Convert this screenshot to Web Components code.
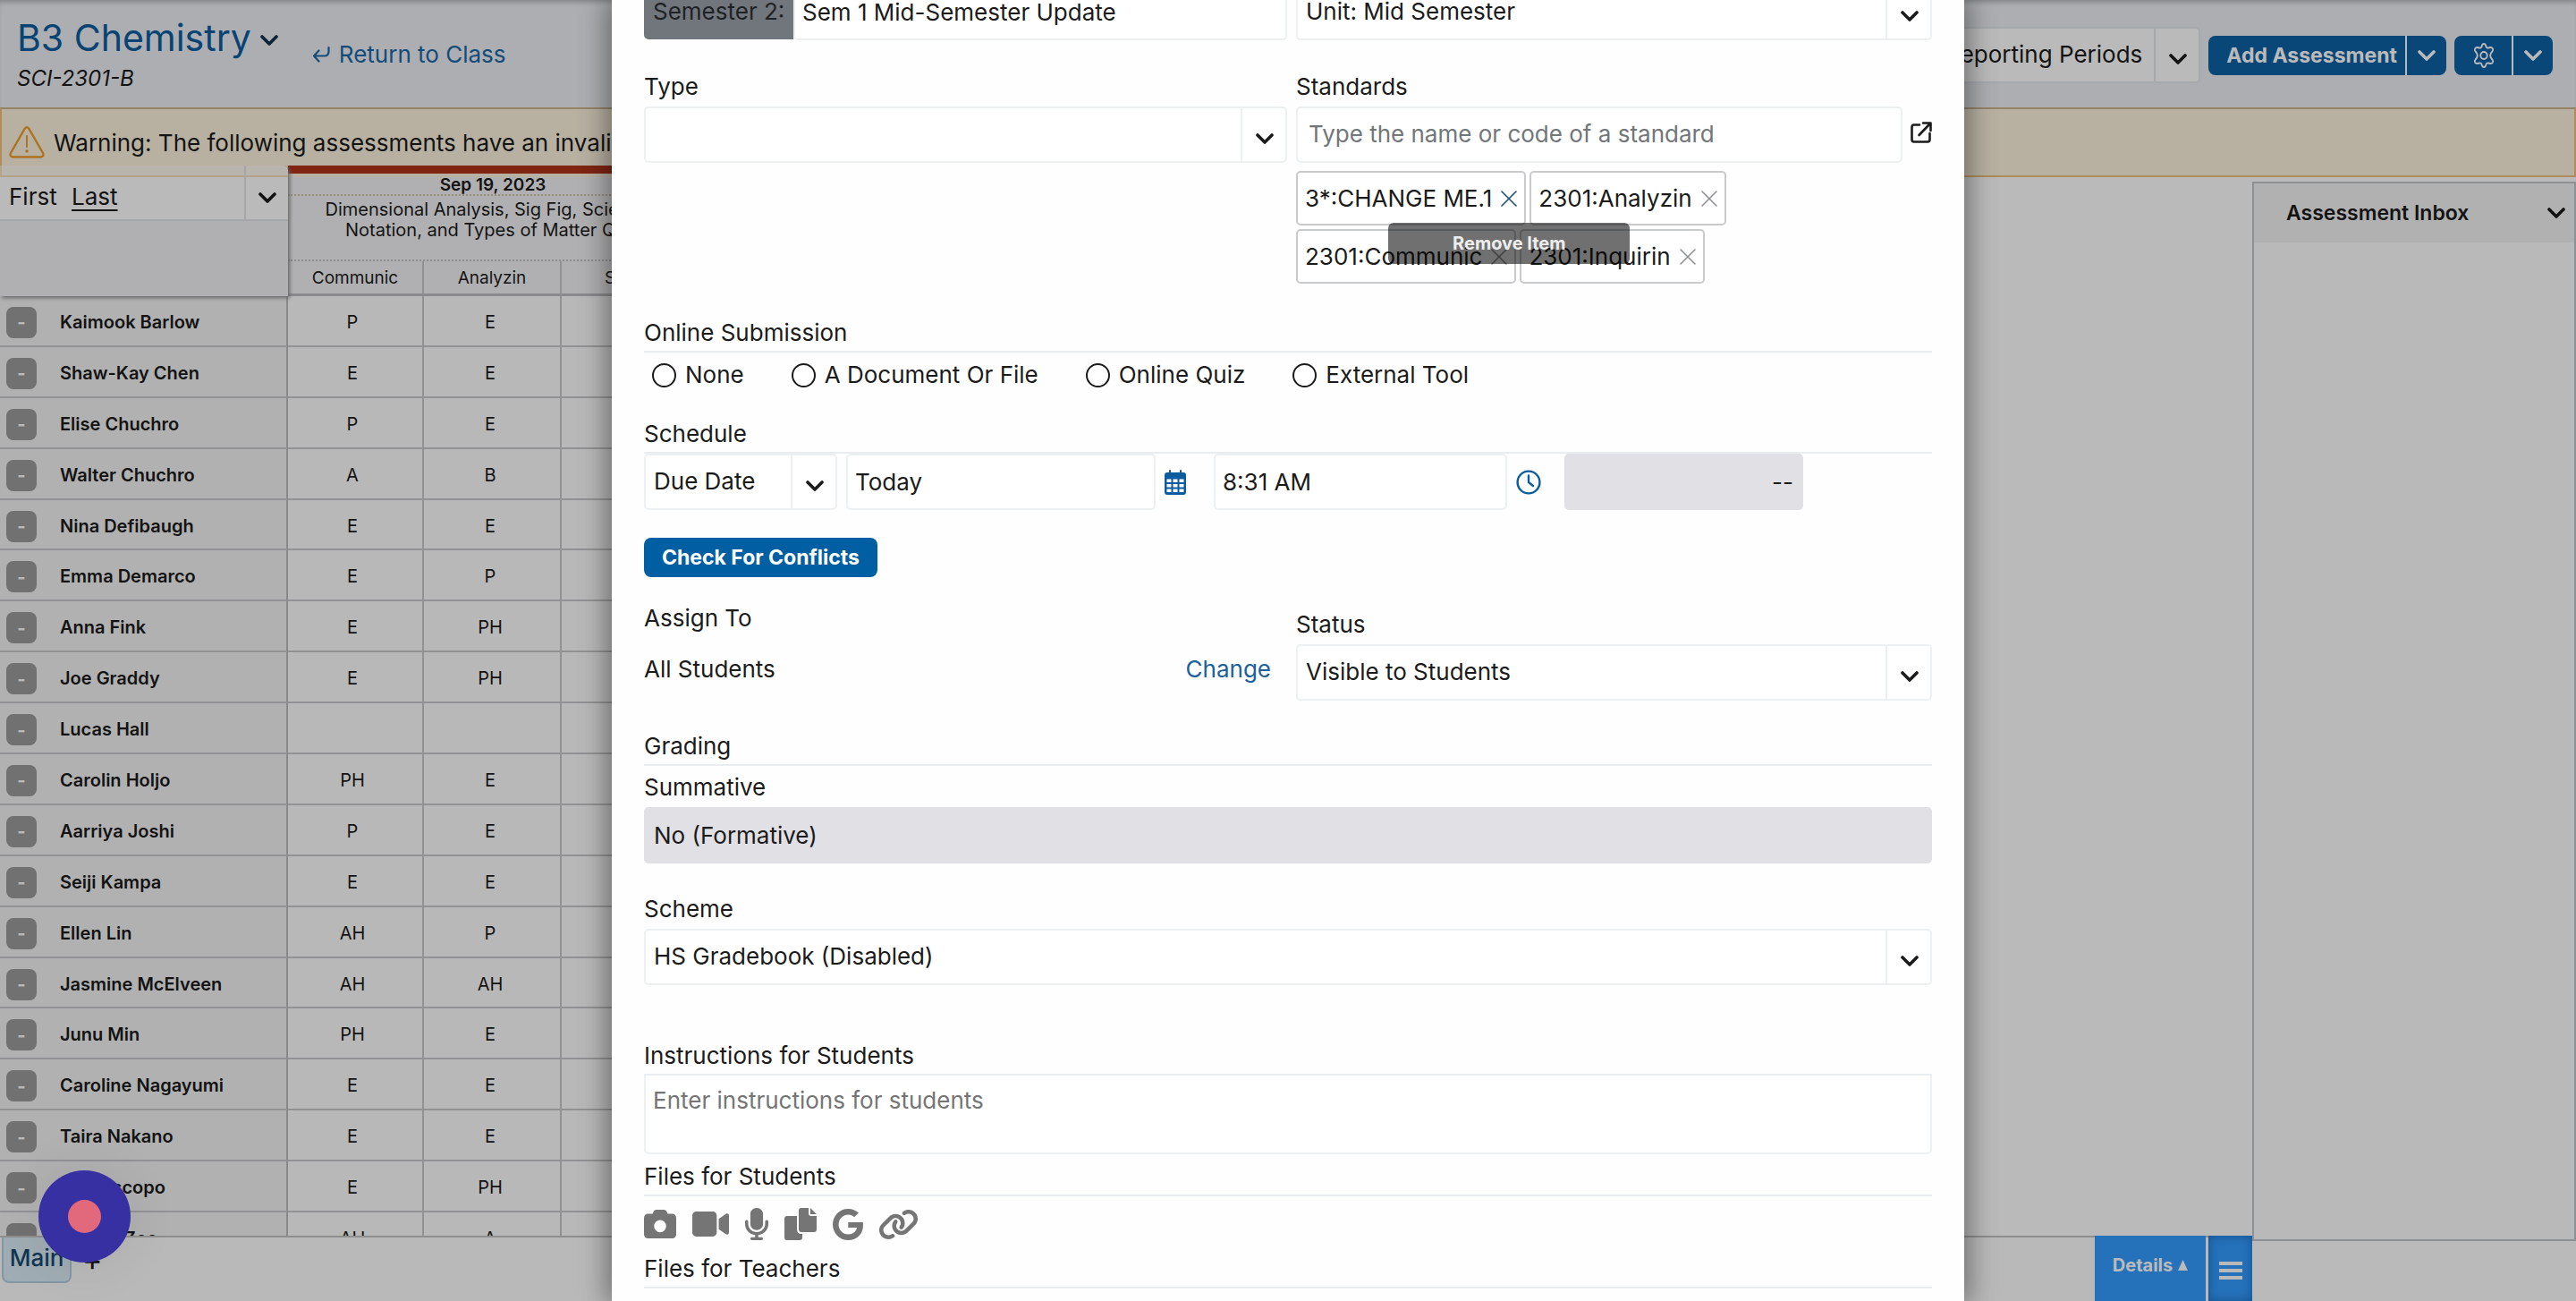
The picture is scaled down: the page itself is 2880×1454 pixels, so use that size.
<!DOCTYPE html>
<html lang="en">
<head>
<meta charset="utf-8">
<title>B3 Chemistry Gradebook</title>
<style>
  html, body { margin: 0; height: 100%; }
  body { font: 400 26px/32px Inter, "Liberation Sans", sans-serif; color: #1b1b1b; background: #fff; overflow: hidden; }
</style>
</head>
<body>
<gb-app></gb-app>
<script>
const ICONS = {
  chevron: ['0 0 20 12', '<path d="M2 2l8 8 8-8" fill="none" stroke="currentColor" stroke-width="3.600" stroke-linecap="round" stroke-linejoin="round"/>'],
  back: ['0 0 20 20', '<path d="M18.500 2v4.500q0 5-5 5H2M7.500 5.500L2 11.500l5.500 6" fill="none" stroke="currentColor" stroke-width="2.200" stroke-linecap="round" stroke-linejoin="round"/>'],
  warn: ['0 0 40 36', '<path d="M17.600 3q2.400-3.500 4.800 0L38 30q1.500 4-2.500 4.500h-31Q.500 34 2 30z" fill="none" stroke="currentColor" stroke-width="2.400"/><path d="M20 11v12" stroke="currentColor" stroke-width="2" stroke-linecap="round"/><circle cx="20" cy="28" r="1.800" fill="currentColor"/>'],
  gear: ['0 0 28 28', '<g fill="none" stroke="currentColor" stroke-width="2" stroke-linejoin="round"><path d="M11.600 3.200q.6-2.200 2.400-2.200t2.400 2.200q.6 2.900 3.400 2.300l1.600-.5q2.200-.4 3.200 1.200 1 1.700-.5 3.300-2.400 2.300-2.400 4.500t2.400 4.500q1.500 1.600.5 3.300-1 1.600-3.200 1.200l-1.600-.5q-2.800-.6-3.400 2.300-.6 2.200-2.400 2.200t-2.400-2.200q-.6-2.900-3.400-2.300l-1.600.5q-2.200.4-3.200-1.200-1-1.700.5-3.300 2.400-2.300 2.400-4.500T3.900 9.500q-1.500-1.600-.5-3.300 1-1.600 3.200-1.200l1.600.5q2.800.6 3.400-2.300z"/><circle cx="14" cy="14" r="4"/></g>'],
  external: ['0 0 24 24', '<path d="M10 3.500H4Q1.500 3.500 1.500 6v14q0 2.500 2.500 2.500h15q2.500 0 2.500-2.500v-7M14 1.500h8.500V10M22 2L9.500 15" fill="none" stroke="currentColor" stroke-width="2.600" stroke-linecap="round" stroke-linejoin="round"/>'],
  cross: ['0 0 18 18', '<path d="M1 1l16 16M17 1L1 17" stroke="currentColor" stroke-width="1.600" stroke-linecap="round"/>'],
  calendar: ['0 0 24 28', '<path fill="currentColor" fill-rule="evenodd" d="M5 1q0-1 1-1t1 1v2h10V1q0-1 1-1t1 1v2h2q3 0 3 3v19q0 3-3 3H3q-3 0-3-3V6q0-3 3-3h2zM2.500 10.500v3.500h5v-3.500zM9.500 10.500v3.500h5v-3.500zM16.500 10.500v3.500h5v-3.500zM2.500 16v3.500h5V16zM9.500 16v3.500h5V16zM16.500 16v3.500h5V16zM2.500 21.500V25h5v-3.500zM9.500 21.500V25h5v-3.500zM16.500 21.500V25h5v-3.500z"/>'],
  clock: ['0 0 28 28', '<g fill="none" stroke="currentColor" stroke-width="2.400" stroke-linecap="round"><circle cx="14" cy="14" r="12.400"/><path d="M14 6.500V14l5 4"/></g>'],
  camera: ['0 32 512 448', '<path fill="currentColor" d="M149.100 64.800L138.700 96H64C28.700 96 0 124.700 0 160V416c0 35.300 28.700 64 64 64H448c35.300 0 64-28.700 64-64V160c0-35.300-28.700-64-64-64H373.300L362.900 64.800C356.400 45.200 338.100 32 317.400 32H194.600c-20.700 0-39 13.200-45.500 32.800zM256 192a96 96 0 1 1 0 192 96 96 0 1 1 0-192z"/>'],
  video: ['0 64 576 384', '<path fill="currentColor" d="M0 128C0 92.700 28.700 64 64 64H320c35.300 0 64 28.700 64 64V384c0 35.300-28.700 64-64 64H64c-35.300 0-64-28.700-64-64V128zM559.100 99.800c10.400 5.600 16.900 16.400 16.900 28.200V384c0 11.800-6.500 22.600-16.900 28.200s-23 5-32.900-1.600l-96-64L416 337.100V174.900l14.200-9.500 96-64c9.800-6.500 22.400-7.200 32.900-1.600z"/>'],
  mic: ['16 0 352 512', '<path fill="currentColor" d="M192 0C139 0 96 43 96 96V256c0 53 43 96 96 96s96-43 96-96V96c0-53-43-96-96-96zM64 216c0-13.300-10.700-24-24-24s-24 10.700-24 24v40c0 89.100 66.200 162.700 152 174.400V464H120c-13.300 0-24 10.700-24 24s10.700 24 24 24h144c13.300 0 24-10.700 24-24s-10.700-24-24-24H216V430.400c85.800-11.700 152-85.300 152-174.400V216c0-13.300-10.700-24-24-24s-24 10.700-24 24v40c0 70.700-57.300 128-128 128s-128-57.300-128-128V216z"/>'],
  copy: ['0 0 36 36', '<path fill="currentColor" d="M19 0h8v6q0 3 3 3h6v15q0 3-3 3H19q-3 0-3-3V3q0-3 3-3zM29 0l7 7h-7zM3 9h11v15q0 5 5 5h1v4q0 3-3 3H3q-3 0-3-3V12q0-3 3-3z"/>'],
  google: ['0 8 488 496', '<path fill="currentColor" d="M488 261.800C488 403.300 391.100 504 248 504 110.800 504 0 393.200 0 256S110.800 8 248 8c66.800 0 123 24.500 166.300 64.900l-67.500 64.900C258.500 52.600 94.300 116.600 94.300 256c0 86.500 69.100 156.600 153.700 156.600 98.200 0 135-70.400 140.800-106.900H248v-85.300h236.100c2.300 12.700 3.900 24.900 3.900 41.400z"/>'],
  link: ['18 20 604 472', '<path fill="currentColor" d="M579.800 267.700c56.500-56.500 56.500-148 0-204.500c-50-50-128.800-56.500-186.300-15.400l-1.600 1.100c-14.400 10.300-17.700 30.300-7.400 44.600s30.300 17.700 44.600 7.400l1.600-1.100c32.100-22.900 76-19.300 103.800 8.600c31.500 31.500 31.500 82.500 0 114L422.300 334.800c-31.500 31.500-82.500 31.500-114 0c-27.900-27.900-31.500-71.800-8.600-103.800l1.100-1.600c10.300-14.400 6.900-34.400-7.400-44.600s-34.400-6.900-44.600 7.400l-1.100 1.600C206.500 251.200 213 330 263 380c56.500 56.500 148 56.500 204.500 0L579.800 267.700zM60.200 244.300c-56.500 56.500-56.500 148 0 204.500c50 50 128.800 56.500 186.300 15.400l1.600-1.100c14.400-10.300 17.700-30.300 7.400-44.600s-30.300-17.700-44.600-7.400l-1.600 1.100c-32.100 22.900-76 19.300-103.800-8.600C74 372 74 321 105.500 289.500L217.700 177.200c31.500-31.500 82.500-31.500 114 0c27.900 27.900 31.500 71.800 8.600 103.900l-1.100 1.600c-10.300 14.400-6.900 34.400 7.400 44.600s34.400 6.900 44.600-7.400l1.100-1.600C433.500 260.800 427 182 377 132c-56.500-56.500-148-56.500-204.500 0L60.200 244.300z"/>'],
  menu: ['0 0 26 20', '<path d="M0 2h26M0 10h26M0 18h26" stroke="currentColor" stroke-width="4"/>'],
  up: ['0 0 11 12', '<path d="M5.500 0L11 12H0z" fill="currentColor"/>']
};

const BASE = `*{box-sizing:border-box}button,input,select,textarea{font:inherit;color:inherit;margin:0;border-radius:0}button{border:0;background:none;padding:0}a{text-decoration:none}h1,h2,h3,p{margin:0;font-weight:400}`;

class Base extends HTMLElement {
  connectedCallback() {
    if (this.shadowRoot) return;
    this.attachShadow({ mode: 'open' }).innerHTML = `<style>${BASE}${this.css()}</style>${this.html()}`;
  }
  at(name, fallback = '') { return this.getAttribute(name) ?? fallback; }
}

customElements.define('gb-icon', class extends Base {
  css() { return `:host{display:inline-flex;flex:none}svg{display:block}`; }
  html() {
    const [box, art] = ICONS[this.at('name')];
    return `<svg viewBox="${box}" width="${this.at('w')}" height="${this.at('h')}" preserveAspectRatio="none" aria-hidden="true">${art}</svg>`;
  }
});

/* Drop-down with a divided arrow cell */
customElements.define('gb-select', class extends Base {
  css() { return `
    :host{display:block;min-width:0}
    label{display:block;margin-bottom:6px}
    .box{display:grid;grid-template-columns:minmax(0,1fr) 50px;height:63px;border:2px solid var(--line,#edf0f2);border-radius:5px;background:#fff}
    select{grid-area:1/1/2/3;appearance:none;background:none;border:0;outline:0;width:100%;padding:0 58px 2px 9px;text-overflow:ellipsis}
    :host([end]) select{text-align-last:right;padding-right:63px}
    span{grid-area:1/2;display:grid;place-items:center;border-left:2px solid var(--line,#edf0f2);padding:8px 0 0 2px;pointer-events:none}`; }
  html() {
    const label = this.at('label'), value = this.at('value');
    return `${label ? `<label for="c">${label}</label>` : ''}<div class="box"><select id="c" ${label ? '' : `aria-label="${this.at('name')}"`}><option>${value}</option></select><span><gb-icon name="chevron" w="20" h="12"></gb-icon></span></div>`;
  }
});

customElements.define('gb-input', class extends Base {
  css() { return `
    :host{display:block;min-width:0}
    label{display:block;margin-bottom:6px}
    input{display:block;width:100%;height:63px;border:2px solid #edf0f2;border-radius:5px;padding:0 8px;background:#fff;outline:0}
    input::placeholder{color:#71767a;opacity:1}
    input[readonly]{background:#e0e0e5;border-color:#e0e0e5;padding:0 9px}
    :host([wide-pad]) input{padding:0 12px 2px}
    :host([end]) input{text-align:right}`; }
  html() {
    const label = this.at('label');
    return `${label ? `<label for="c">${label}</label>` : ''}<input id="c" type="text" ${label ? '' : `aria-label="${this.at('name')}"`} value="${this.at('value')}" placeholder="${this.at('placeholder')}" ${this.hasAttribute('locked') ? 'readonly' : ''}>`;
  }
});

customElements.define('gb-heading', class extends Base {
  css() { return `:host{display:block}h2{font-size:inherit;line-height:32px;padding-bottom:4px;border-bottom:2px solid #e9edef}`; }
  html() { return `<h2><slot></slot></h2>`; }
});

customElements.define('gb-button', class extends Base {
  css() { return `
    :host{display:flex}
    button{height:44px;background:var(--blue,#005ea2);color:#fff;font-weight:700;font-size:23px;line-height:32px;padding:0 20px;display:flex;align-items:center;border-radius:8px}
    :host([split]) button:first-of-type{border-radius:8px 0 0 8px;padding-right:9px}
    button.more{border-left:2px solid #fff;border-radius:0 8px 8px 0;padding:0 12px}
    :host([split][icon-only]) button:first-of-type{padding-right:18px}`; }
  html() {
    const name = this.at('name');
    return `<button type="button"${name ? ` aria-label="${name}"` : ''}><slot></slot></button>${this.hasAttribute('split') ? `<button class="more" type="button" aria-label="More options"><gb-icon name="chevron" w="20" h="12"></gb-icon></button>` : ''}`;
  }
});

customElements.define('gb-chip', class extends Base {
  css() { return `
    :host{display:flex;align-items:center;gap:10px;height:61px;padding:0 8px;border:2px solid #c8cacc;border-radius:5px;background:#fff;white-space:nowrap}
    button{display:grid;color:#8d9092;position:relative}
    :host([active]) button{color:#1a4f7d}
    [role=tooltip]{position:absolute;left:50%;top:36px;transform:translateX(-50%);width:270px;height:46px;z-index:3;background:rgba(0,0,0,.56);color:#eee;font-weight:700;font-size:20px;line-height:46px;border-radius:6px;text-align:center}`; }
  html() { return `<span><slot></slot></span><button type="button" aria-label="Remove Item"><gb-icon name="cross" w="18" h="18"></gb-icon>${this.hasAttribute('active') ? '<span role="tooltip">Remove Item</span>' : ''}</button>`; }
});

customElements.define('gb-radio', class extends Base {
  css() { return `:host{display:block}label{display:flex;align-items:center;gap:10px}input{appearance:none;width:27px;height:27px;border:2px solid #1b1b1b;border-radius:50%;background:#fff}`; }
  html() { return `<label><input type="radio" name="submission"><span><slot></slot></span></label>`; }
});

customElements.define('gb-header', class extends Base {
  css() { return `
    :host{display:flex;justify-content:space-between;height:120px;padding:0 26px 0 19px;background:#edeff3;box-shadow:inset 0 5px 5px -2px #b9bbbf}
    .left{display:flex;gap:38px}
    h1{font-size:41px;line-height:48px;color:#0a5c9e;display:flex;align-items:center;gap:10px;padding-top:18px}
    h1 gb-icon{color:#12304c;padding-top:6px}
    p{font-style:italic;font-size:24px;line-height:30px;margin-top:7px}
    a{color:#1b69a8;display:flex;gap:10px;align-items:center;height:32px;margin-top:45px}
    .right{display:flex;align-items:flex-start;gap:9px;padding-top:30px}
    .right gb-button{margin-top:10px;--blue:#0f62a6}
    gb-select{--line:#e4e8ec;width:340px}`; }
  html() { return `
    <div class="left"><div><h1>B3 Chemistry <gb-icon name="chevron" w="20" h="12"></gb-icon></h1><p>SCI-2301-B</p></div>
    <a href="#class"><gb-icon name="back" w="20" h="20"></gb-icon>Return to Class</a></div>
    <div class="right"><gb-select end name="Reporting period" value="All Reporting Periods"></gb-select>
    <gb-button split>Add Assessment</gb-button>
    <gb-button split icon-only name="Settings"><gb-icon name="gear" w="26" h="28"></gb-icon></gb-button></div>`; }
});

customElements.define('gb-warning', class extends Base {
  css() { return `:host{display:flex;gap:10px;height:78px;padding:19px 8px 0;background:#fcf3de;border:2px solid #f0c27c;border-top-color:#cdb68c;white-space:nowrap;overflow:hidden}gb-icon{color:#ee9f2d}p{line-height:38px}`; }
  html() { return `<gb-icon name="warn" w="40" h="36"></gb-icon><p>Warning: The following assessments have an invalid date.</p>`; }
});

const ROWS = [['Kaimook Barlow','P','E'],['Shaw-Kay Chen','E','E'],['Elise Chuchro','P','E'],['Walter Chuchro','A','B'],['Nina Defibaugh','E','E'],['Emma Demarco','E','P'],['Anna Fink','E','PH'],['Joe Graddy','E','PH'],['Lucas Hall','',''],['Carolin Holjo','PH','E'],['Aarriya Joshi','P','E'],['Seiji Kampa','E','E'],['Ellen Lin','AH','P'],['Jasmine McElveen','AH','AH'],['Junu Min','PH','E'],['Caroline Nagayumi','E','E'],['Taira Nakano','E','E'],['Leo Piscopo','E','PH'],['Valeria Zoe','AH','A']];

customElements.define('gb-table', class extends Base {
  css() { return `
    :host{display:block;overflow:hidden}
    table{border-collapse:separate;border-spacing:0;table-layout:fixed;width:782px;height:1227px;font-size:20px;line-height:23px}
    th,td{padding:0;font-weight:400;text-align:center;border-right:2px solid #c9c9cb;border-bottom:2px solid #c9c9cb;background:#fdfdfd}
    thead th{background:#f2f2f4}
    thead .sort{background:linear-gradient(rgba(255,255,255,.5) 62px,#f2f2f4 62px);vertical-align:top;text-align:left;border:0;box-shadow:2px 2px 4px #8a8a8a;position:relative;border-radius:0 6px 0 0}
    .pick{display:grid;grid-template-columns:1fr 49px;height:62px;border-bottom:2px solid #e2e4e6;font-size:26px;line-height:32px}
    .pick button{text-align:left;padding:10px 0 0 10px}.pick u{margin-left:9px;text-decoration-thickness:2px;text-underline-offset:5px}
    .pick span{border-left:2px solid #e2e4e6;display:grid;place-items:center;padding-top:12px}
    .date{height:34px;border-top:9px solid #ae331a;border-bottom:2px dotted #c0c0c2;font-weight:600;font-size:19px;line-height:20px;padding-top:3px;background:linear-gradient(#fcf3de 4px,#f2f2f4 4px)}
    .title{height:73px;vertical-align:top;padding-top:4px;border-bottom:2px dotted #c0c0c2}
    .std{height:39px;border-bottom:3px solid #bdbdc0;font-size:19px}
    tbody th,tbody td{padding-top:4px}
    tbody th{background:#f3f3f3;text-align:left;font-weight:600;border-right-color:#bcbcc0}
    .name{display:flex;align-items:center;gap:26px;padding-left:7px}
    .name button{width:34px;height:35px;border-radius:8px;background:#9c9c9c;color:#fff;line-height:32px;font-weight:700}
    tbody td:nth-child(2){padding-right:6px}tbody td:nth-child(3){padding-right:4px}`; }
  html() { return `<table>
    <colgroup><col style="width:322px"><col style="width:152px"><col style="width:154px"><col></colgroup>
    <thead><tr><th class="sort" rowspan="3"><div class="pick"><button type="button">First <u>Last</u></button><span><gb-icon name="chevron" w="20" h="12"></gb-icon></span></div></th><th class="date" colspan="3">Sep 19, 2023</th></tr>
    <tr><th class="title" colspan="3">Dimensional Analysis, Sig Fig, Scientific<br>Notation, and Types of Matter Quiz</th></tr>
    <tr><th class="std">Communic</th><th class="std">Analyzin</th><th class="std">Scient</th></tr></thead>
    <tbody>${ROWS.map(r => `<tr><th scope="row"><div class="name"><button type="button">-</button>${r[0]}</div></th><td>${r[1]}</td><td>${r[2]}</td><td></td></tr>`).join('')}</tbody></table>`; }
});

customElements.define('gb-inbox', class extends Base {
  css() { return `:host{display:block;border:2px solid #c3c7cb;background:#fefefe}header{display:flex;justify-content:space-between;align-items:center;height:66px;background:#f3f3f3;padding:0 10px 0 36px}h2{font-size:23px;line-height:32px;font-weight:600}`; }
  html() { return `<header><h2>Assessment Inbox</h2><gb-icon name="chevron" w="20" h="12"></gb-icon></header>`; }
});

customElements.define('gb-footer', class extends Base {
  css() { return `
    :host{display:flex;justify-content:space-between;height:73px;border-top:2px solid #c3c3c5;background:#fefefe}
    .tabs{display:flex;gap:12px;padding-left:2px}
    .tab{width:78px;height:51px;background:#dcecf6;border:2px solid #b4cfe2;border-top:0;border-radius:0 0 8px 8px;font-weight:500;display:grid;place-items:center;padding-bottom:4px;color:#174a74}
    .add{font-size:34px;padding:0 0 22px}
    .actions{display:flex;gap:3px;margin-top:-2px}
    .actions button{background:#349cff;color:#fff;font-weight:700;font-size:20px;display:flex;align-items:center;justify-content:center;gap:6px;width:124px;padding-bottom:8px}
    .actions button + button{width:49px;padding:4px 0 0;box-shadow:inset 0 0 12px #1c6fc0}`; }
  html() { return `<div class="tabs"><button class="tab" type="button">Main</button><button class="add" type="button">+</button></div>
    <div class="actions"><button type="button">Details <gb-icon name="up" w="11" h="12"></gb-icon></button><button type="button" aria-label="Menu"><gb-icon name="menu" w="26" h="20"></gb-icon></button></div>`; }
});

customElements.define('gb-dialog', class extends Base {
  css() { return `
    :host{display:block;background:#fefefe;padding:0 36px;box-shadow:0 0 30px 4px rgba(0,0,0,.45)}
    .pair{display:grid;grid-template-columns:719px minmax(0,1fr);gap:10px}
    .top{margin-top:-18px;height:62px}
    .sem{display:flex;align-items:center}
    .sem span{height:60px;width:167px;background:#71767d;color:#1f2225;padding:13px 0 0 10px;border-radius:0 0 0 5px}
    .sem gb-input{flex:1}
    .types{margin-top:37px}
    .std{display:flex;align-items:flex-end;gap:9px}.std gb-input{flex:1}
    .std button{height:63px;padding-bottom:6px;display:flex;align-items:center}
    .chips{display:flex;flex-wrap:wrap;gap:4px;margin-top:9px;max-width:520px}
    .online{margin-top:39px}
    .radios{display:flex;gap:53px;height:50px;align-items:center;padding-left:9px}
    .sched{margin-top:25px}
    .when{display:flex;align-items:center}
    .when gb-icon{color:#0a5c9e;margin-left:10px}
    .check{margin-top:31px}
    .assign{margin-top:30px}
    .assign h3{font-size:inherit}
    .who{display:flex;justify-content:space-between;margin-top:25px;padding-right:18px}a{color:#1b619c}
    .assign gb-select{margin-top:7px}
    .grading{margin-top:35px}.grading + gb-input{margin-top:8px}
    .scheme{margin-top:35px}
    .instr{margin-top:63px}
    textarea{display:block;width:100%;height:88px;resize:none;border:2px solid #edf0f2;border-top:0;border-radius:0 0 5px 5px;padding:12px 8px;outline:0;background:#fff}
    textarea::placeholder{color:#757575;opacity:1}
    .files{margin-top:9px}
    .tools{display:flex;align-items:center;gap:18px;height:65px;padding-bottom:3px;color:#757575}
    .tools button{display:grid;color:inherit}`; }
  html() {
    const tool = (n, w, h, l) => `<button type="button" aria-label="${l}"><gb-icon name="${n}" w="${w}" h="${h}"></gb-icon></button>`;
    return `
    <div class="pair top"><div class="sem"><span>Semester 2:</span><gb-input name="Semester 2 unit" value="Sem 1 Mid-Semester Update"></gb-input></div><gb-select name="Unit" value="Unit: Mid Semester"></gb-select></div>
    <div class="pair types"><gb-select label="Type" value=""></gb-select>
      <div><div class="std"><gb-input wide-pad label="Standards" placeholder="Type the name or code of a standard"></gb-input><button type="button" aria-label="Browse standards"><gb-icon name="external" w="24" h="24"></gb-icon></button></div>
      <div class="chips"><gb-chip active>3*:CHANGE ME.1</gb-chip><gb-chip>2301:Analyzin</gb-chip><gb-chip>2301:Communic</gb-chip><gb-chip>2301:Inquirin</gb-chip></div></div></div>
    <gb-heading class="online">Online Submission</gb-heading>
    <div class="radios"><gb-radio>None</gb-radio><gb-radio>A Document Or File</gb-radio><gb-radio>Online Quiz</gb-radio><gb-radio>External Tool</gb-radio></div>
    <gb-heading class="sched">Schedule</gb-heading>
    <div class="when"><gb-select name="Date kind" value="Due Date" style="width:216px;margin-right:10px"></gb-select><gb-input name="Date" value="Today" style="width:346px"></gb-input><gb-icon name="calendar" w="24" h="28" style="margin-right:31px"></gb-icon><gb-input name="Time" value="8:31 AM" style="width:328px"></gb-input><gb-icon name="clock" w="28" h="28" style="margin-right:26px"></gb-icon><gb-input end locked name="Conflicts" value="--" style="width:267px"></gb-input></div>
    <gb-button class="check">Check For Conflicts</gb-button>
    <div class="pair assign"><div><h3>Assign To</h3><div class="who"><span>All Students</span><a href="#change">Change</a></div></div><gb-select label="Status" value="Visible to Students"></gb-select></div>
    <gb-heading class="grading">Grading</gb-heading>
    <gb-input locked label="Summative" value="No (Formative)"></gb-input>
    <gb-select class="scheme" label="Scheme" value="HS Gradebook (Disabled)"></gb-select>
    <gb-heading class="instr">Instructions for Students</gb-heading>
    <textarea aria-label="Instructions for Students" placeholder="Enter instructions for students"></textarea>
    <gb-heading class="files">Files for Students</gb-heading>
    <div class="tools">${tool('camera', 36, 32, 'Photo')}${tool('video', 41, 28, 'Video')}${tool('mic', 26, 36, 'Audio')}${tool('copy', 36, 36, 'File')}${tool('google', 34, 35, 'Google Drive')}${tool('link', 43, 33, 'Link')}</div>
    <gb-heading>Files for Teachers</gb-heading>`;
  }
});

customElements.define('gb-app', class extends Base {
  css() { return `
    :host{display:flex;flex-direction:column;height:100vh;overflow:hidden;position:relative}
    .body{display:flex;flex:1;min-height:0}
    .main{flex:1;min-width:0;display:flex;flex-direction:column;margin-top:-13px}
    gb-table{flex:1;min-height:0}
    gb-inbox{width:362px;margin:5px 0 67px}
    .veil{position:absolute;inset:0;background:rgba(0,0,0,.27);display:flex;justify-content:center;z-index:1}
    gb-dialog{width:52.5%}
    .record{position:absolute;left:43px;bottom:43px;width:103px;height:103px;border-radius:50%;background:#3730a3;display:grid;place-items:center;z-index:2;box-shadow:0 0 60px rgba(0,0,0,.08)}
    .record i{width:37px;height:37px;border-radius:50%;background:#e2697b}`; }
  html() { return `<gb-header></gb-header><gb-warning></gb-warning>
    <div class="body"><div class="main"><gb-table></gb-table><gb-footer></gb-footer></div><gb-inbox></gb-inbox></div>
    <div class="veil"><gb-dialog role="dialog" aria-label="Edit assessment"></gb-dialog></div>
    <button class="record" type="button" aria-label="Record"><i></i></button>`; }
});
</script>
</body>
</html>
